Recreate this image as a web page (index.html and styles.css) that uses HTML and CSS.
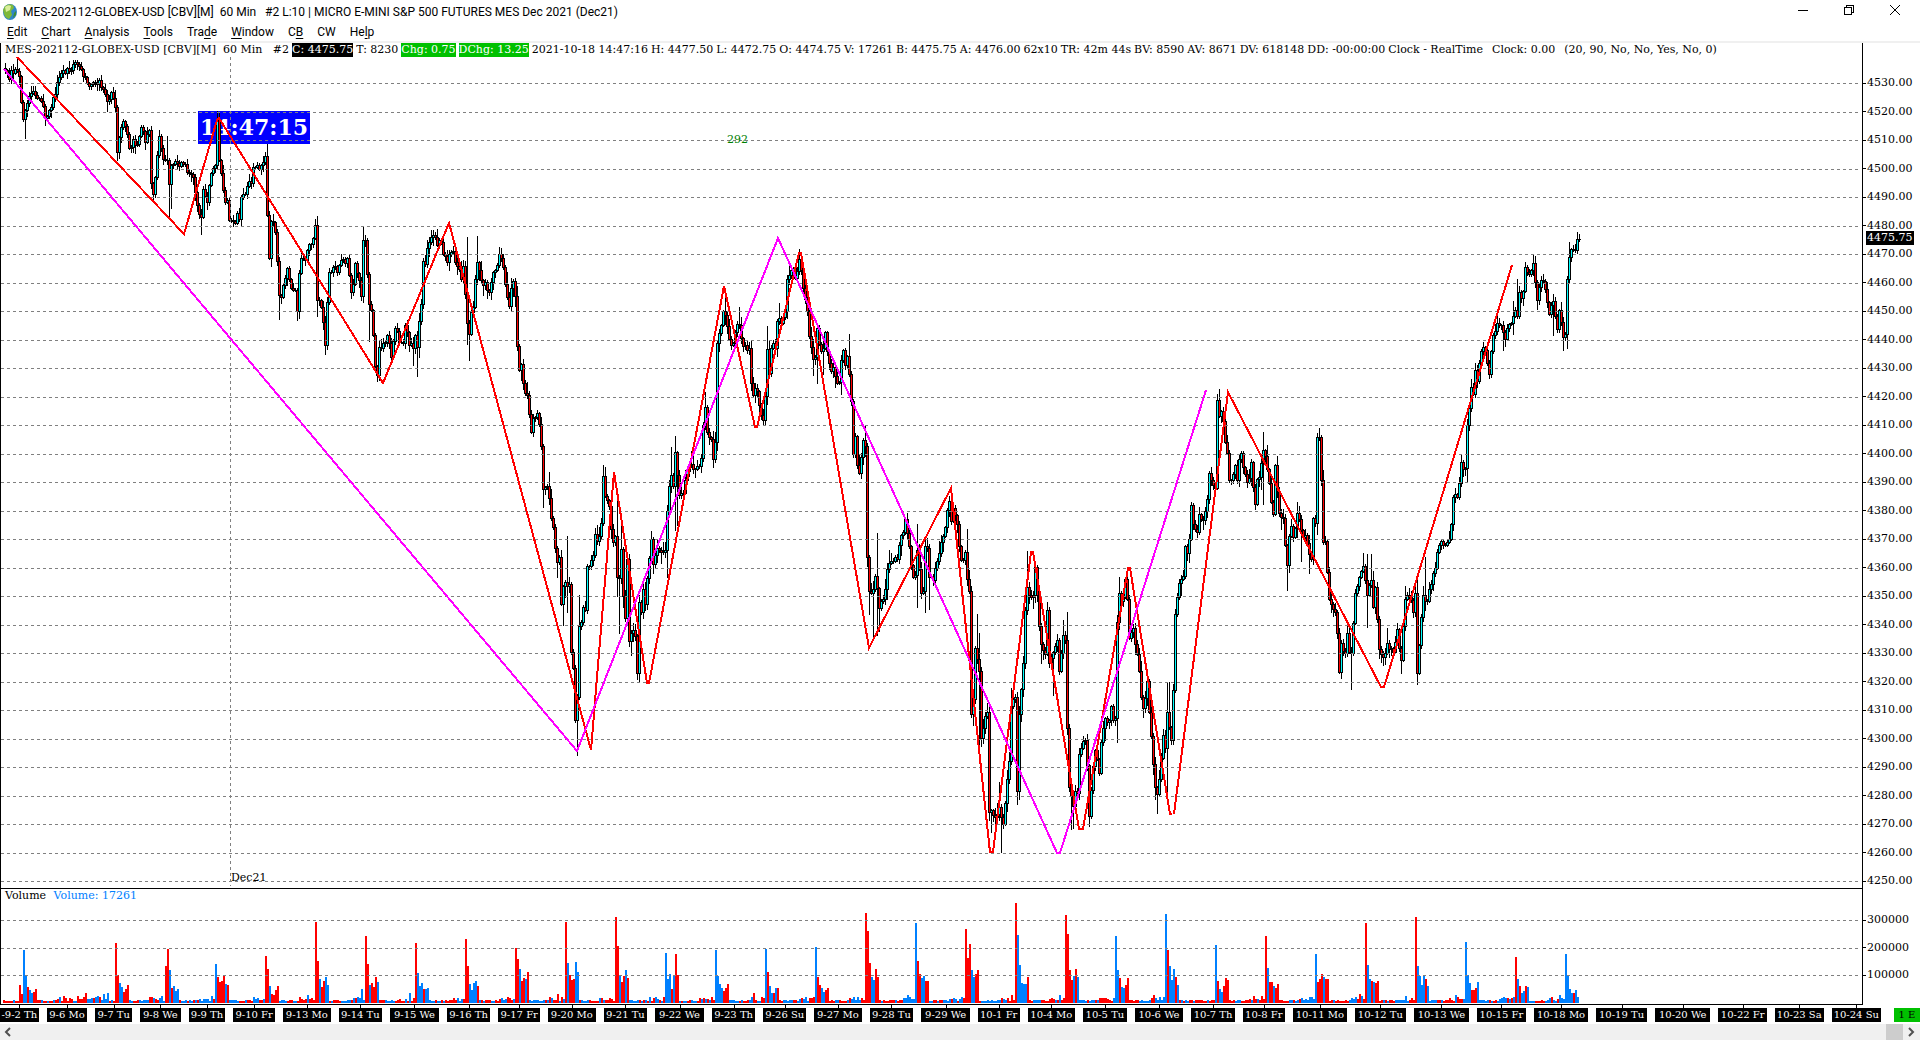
FILE: index.html
```html
<!DOCTYPE html>
<html lang="en">
<head>
    <meta charset="UTF-8">
    <meta name="viewport" content="width=device-width, initial-scale=1.0">
    <title>MES-202112-GLOBEX-USD [CBV][M]  60 Min</title>
    <link rel="stylesheet" href="styles.css">
</head>
<body>
    <header class="titlebar">
        <svg class="app-icon" viewBox="0 0 16 18">
            <ellipse cx="8" cy="9" rx="7" ry="8" fill="#2f86c9" />
            <path d="M3 3 Q7 0 11 2 L12 5 L9 8 L10 12 L7 16 Q3 15 2 11 L1 7 Z" fill="#7fb93a" />
            <path d="M3 4 Q6 1 9 3 L8 7 L4 9 Z" fill="#d9ee9a" />
            <path d="M12 10 L14 8 L14 12 L11 15 Z" fill="#3c8d3a" />
        </svg>
        <h1>MES-202112-GLOBEX-USD [CBV][M]&nbsp; 60 Min &nbsp; #2 L:10 | MICRO E-MINI S&amp;P 500 FUTURES MES Dec 2021 (Dec21)</h1>
        <div class="window-buttons">
            <button aria-label="Minimize"><svg viewBox="0 0 10 10"><path d="M0 5.5H10" /></svg></button>
            <button aria-label="Restore"><svg viewBox="0 0 10 10"><path d="M.5 2.5H7.5V9.5H.5ZM2.5 2.5V.5H9.5V7.5H7.5" /></svg></button>
            <button aria-label="Close"><svg class="smooth" viewBox="0 0 10 10"><path d="M0 0L10 10M10 0L0 10" /></svg></button>
        </div>
    </header>

    <nav class="menu">
        <button><u>E</u>dit</button>
        <button><u>C</u>hart</button>
        <button><u>A</u>nalysis</button>
        <button><u>T</u>ools</button>
        <button>Tra<u>d</u>e</button>
        <button><u>W</u>indow</button>
        <button>C<u>B</u></button>
        <button>CW</button>
        <button>He<u>l</u>p</button>
    </nav>

    <main class="chart">
        <section class="price-pane">
            <div class="readout">
                <span>MES-202112-GLOBEX-USD [CBV][M]&nbsp; 60 Min &nbsp; #2</span>
                <span class="last">C: 4475.75</span>
                <span>T: 8230</span>
                <span class="up">Chg: 0.75</span>
                <span class="up">DChg: 13.25</span>
                <span>2021-10-18 14:47:16</span>
                <span>H: 4477.50</span>
                <span>L: 4472.75</span>
                <span>O: 4474.75</span>
                <span>V: 17261</span>
                <span>B: 4475.75</span>
                <span>A: 4476.00</span>
                <span>62x10</span>
                <span>TR: 42m 44s</span>
                <span>BV: 8590</span>
                <span>AV: 8671</span>
                <span>DV: 618148</span>
                <span>DD: -00:00:00</span>
                <span>Clock - RealTime</span>
                <span class="study">Clock: 0.00</span>
                <span class="study">(20, 90, No, No, Yes, No, 0)</span>
            </div>
            <div class="plot">
                <div class="clock">14:47:15</div>
                <svg id="price" viewBox="1 57 1861 831" preserveAspectRatio="none"></svg>
                <span class="count">292</span>
                <span class="contract">Dec21</span>
            </div>
        </section>
        <aside class="price-axis" id="price-axis">
            <span class="current">4475.75</span>
        </aside>

        <section class="volume-pane">
            <div class="legend">Volume <span>Volume: 17261</span></div>
            <svg id="volume" viewBox="1 889 1861 115" preserveAspectRatio="none"></svg>
        </section>
        <aside class="volume-axis">
            <span>300000</span>
            <span>200000</span>
            <span>100000</span>
        </aside>
    </main>

    <div class="dates">
        <div class="date-labels" id="dates"></div>
        <span class="flag">1 E</span>
    </div>

    <div class="scrollbar">
        <button aria-label="Scroll left"><svg viewBox="0 0 16 16"><path d="M10 4L6 8L10 12" /></svg></button>
        <div class="track"><div class="thumb"></div></div>
        <button aria-label="Scroll right"><svg viewBox="0 0 16 16"><path d="M6 4L10 8L6 12" /></svg></button>
    </div>

    <script src="chart.js"></script>
</body>
</html>
```

FILE: styles.css
```css
* {
    margin: 0;
    padding: 0;
    box-sizing: border-box;
}

body {
    display: flex;
    flex-direction: column;
    height: 100vh;
    overflow: hidden;
    background: #fff;
    color: #000;
    font-family: Roboto, "Open Sans", sans-serif;
    font-size: 12px;
}

button {
    border: none;
    background: none;
    font: inherit;
    color: inherit;
}

svg {
    display: block;
}

/* Title bar and menu */

.titlebar {
    display: flex;
    align-items: center;
    height: 24px;
    padding: 0 2px;
}

.app-icon {
    width: 16px;
    height: 18px;
    margin-right: 5px;
}

.titlebar h1 {
    flex: 1;
    font-size: 12px;
    font-weight: 400;
    white-space: nowrap;
}

.window-buttons {
    display: flex;
    align-self: flex-start;
}

.window-buttons button {
    width: 46px;
    height: 20px;
    padding: 5px 18px;
}

.window-buttons svg {
    width: 10px;
    height: 10px;
    fill: none;
    stroke: #000;
    shape-rendering: crispEdges;
}

.window-buttons .smooth {
    shape-rendering: auto;
}

.menu {
    display: flex;
    gap: 14px;
    height: 19px;
    padding-left: 7px;
    line-height: 17px;
    border-bottom: 2px solid #f0f0f0;
}

.menu u {
    text-underline-offset: 2px;
}

/* Chart panes */

.chart {
    flex: 1;
    display: grid;
    grid-template-columns: 1fr 58px;
    grid-template-rows: 1fr 116px;
    min-height: 0;
    border-left: 1px solid #000;
    font-family: "DejaVu Serif", serif;
    font-size: 11px;
    line-height: 14px;
}

.price-pane {
    display: flex;
    flex-direction: column;
    min-width: 0;
    min-height: 0;
}

.readout {
    display: flex;
    gap: 3px;
    height: 14px;
    padding-left: 4px;
    white-space: nowrap;
}

.last {
    background: #000;
    color: #fff;
}

.up {
    background: #00c000;
    color: #fff;
}

.study {
    margin-left: 6px;
}

.plot {
    position: relative;
    flex: 1;
    min-height: 0;
}

.plot svg {
    position: absolute;
    inset: 0;
    width: 100%;
    height: 100%;
}

.clock {
    position: absolute;
    left: 197px;
    top: 54px;
    padding: 0 2px;
    background: #00f;
    color: #fff;
    font: bold 22px/33px "DejaVu Serif", serif;
}

.count,
.contract {
    position: absolute;
}

.count {
    left: 726px;
    top: 76px;
    color: #008000;
}

.contract {
    left: 230px;
    bottom: 3px;
}

.price-axis,
.volume-axis {
    position: relative;
    display: flex;
    flex-direction: column;
    justify-content: space-between;
    border-left: 1px solid #000;
}

.price-axis {
    padding-top: 33px;
}

.volume-axis {
    padding: 25px 0 22px;
}

.price-axis span,
.volume-axis span {
    display: flex;
    align-items: center;
    gap: 1px;
    height: 14px;
}

.price-axis span::before,
.volume-axis span::before {
    content: "";
    width: 3px;
    height: 1px;
    background: #000;
}

.price-axis .current {
    position: absolute;
    left: 3px;
    top: 188px;
    z-index: 1;
    padding: 0 1px;
    background: #000;
    color: #fff;
}

.price-axis .current::before {
    display: none;
}

.volume-pane {
    position: relative;
    border-top: 1px solid #000;
}

.legend {
    position: absolute;
    left: 4px;
    top: 0;
}

.legend span {
    margin-left: 4px;
    color: #0080ff;
}

.volume-pane svg {
    width: 100%;
    height: 115px;
}

#price,
#volume {
    fill: none;
    stroke-width: 2px;
    shape-rendering: crispEdges;
}

.grid {
    stroke: #808080;
    stroke-width: 1px;
    stroke-dasharray: 3 3;
}

.wick { fill: #000; }
.bull { fill: #0ff; }
.bear { fill: #f00; }
.vol-up { fill: #0080ff; }
.vol-down { fill: #f00; }
.swing { stroke: #f00; }
.trend { stroke: #f0f; }

/* Date strip */

.dates {
    display: flex;
    justify-content: space-between;
    height: 20px;
    font: 10px/14px "DejaVu Serif", serif;
    background: linear-gradient(#000, #000) 0 0 / calc(100% - 57px) 1px no-repeat;
}

.date-labels {
    flex: 1;
    display: flex;
    gap: 8px;
    padding-top: 4px;
    margin-right: 13px;
}

.date-labels span {
    position: relative;
    flex-basis: 0;
    height: 14px;
    background: #000;
    color: #fff;
    text-align: center;
    white-space: nowrap;
}

.date-labels span::before {
    content: "";
    position: absolute;
    left: 50%;
    top: -4px;
    width: 1px;
    height: 4px;
    background: #000;
}

.flag {
    width: 26px;
    height: 14px;
    margin-top: 4px;
    background: #00c000;
    text-align: center;
}

/* Horizontal scroll bar */

.scrollbar {
    display: flex;
    height: 16px;
    background: #f0f0f0;
}

.scrollbar button {
    width: 17px;
    height: 16px;
}

.scrollbar svg {
    width: 16px;
    height: 16px;
    fill: none;
    stroke: #505050;
    stroke-width: 2px;
}

.track {
    flex: 1;
    display: flex;
    justify-content: flex-end;
}

.thumb {
    width: 17px;
    background: #cdcdcd;
}
```

FILE: chart.js
```js
// Closing levels along the series: x y pairs in plot units
const closes = `
5 70 8 81 10 70 12 73 17 71 20 75 22 128 24 113 26 103 30 93 34 89 37 98 42 102 45 118 50 108 54 98
57 82 62 71 67 68 72 70 75 62 80 67 85 77 89 86 92 82 100 80 104 93 107 101 111 92 115 107 117 152
120 133 123 121 126 130 129 148 133 139 136 148 138 136 141 127 145 142 149 130 151 183 153 194
155 177 157 155 159 136 163 159 167 160 169 184 171 165 177 163 182 162 187 172 193 177 197 205
201 217 203 189 207 202 211 173 215 165 217 120 219 160 223 190 225 202 227 200 229 220 235 223
237 213 239 219 241 197 246 193 248 178 251 183 254 162 258 167 262 163 265 156 267 215 269 258
271 221 274 222 276 242 278 277 280 306 282 289 287 268 290 288 295 290 297 311 299 273 301 258
305 260 308 247 312 240 315 225 317 300 321 307 323 322 325 345 327 302 329 272 333 267 337 272
341 260 345 263 348 260 351 292 354 283 355 263 358 277 361 296 363 240 366 240 368 307 372 306
374 357 377 375 379 347 383 343 388 333 391 357 395 328 400 345 403 343 405 325 409 345 413 348
415 335 417 347 419 321 421 304 423 261 425 264 427 248 430 237 435 237 437 245 440 235 442 250
446 261 450 254 453 251 457 266 461 279 463 266 467 323 469 334 471 312 473 307 475 279 477 262
480 280 485 282 488 292 491 282 495 270 499 254 504 270 506 291 509 306 512 277 515 296 517 346
519 370 521 364 524 396 527 395 531 432 534 416 538 410 541 446 543 489 547 486 551 518 554 536
557 562 559 557 561 604 563 586 569 584 571 652 573 668 575 720 577 697 579 626 582 616 584 606
586 608 587 566 592 559 595 534 598 539 601 523 603 476 605 496 609 506 612 543 615 536 618 593
621 549 623 596 625 618 627 559 629 641 633 630 635 636 637 673 639 602 641 612 643 589 645 604
647 578 651 539 653 564 656 546 660 553 665 550 667 511 670 471 673 486 675 452 679 495 683 493
687 471 690 464 697 466 700 464 702 446 704 398 707 432 711 439 713 459 715 442 717 343 720 332
723 311 726 316 729 339 733 343 736 327 739 325 742 345 747 350 749 348 752 399 756 384 759 405
763 420 765 396 767 349 769 373 772 337 775 348 777 321 782 323 785 311 787 279 792 268 796 279
799 259 802 279 804 294 807 311 809 336 812 357 815 357 817 328 820 348 823 348 825 332 829 363
831 371 833 367 838 387 841 360 843 350 845 365 848 357 851 401 853 454 855 436 858 478 861 457
863 440 865 446 867 557 869 591 874 589 875 576 879 608 883 599 885 589 887 569 893 561 897 559
899 545 903 532 905 519 909 546 913 577 915 575 917 550 921 593 923 591 925 546 927 548 929 577
933 580 937 561 941 542 944 536 947 510 949 501 951 521 953 508 956 512 958 538 962 565 965 552
967 579 969 591 971 714 973 699 975 648 979 671 981 738 983 728 987 712 989 812 997 814 1000 808
1003 824 1006 793 1009 761 1011 706 1015 697 1017 791 1019 714 1023 663 1025 610 1027 587 1030 603
1033 595 1035 567 1039 626 1041 644 1045 654 1047 610 1049 663 1053 652 1057 640 1059 671 1062 638
1065 640 1067 728 1069 787 1073 806 1075 791 1077 793 1079 754 1085 740 1087 765 1089 816 1092 783
1094 750 1097 759 1099 773 1101 742 1105 718 1109 720 1111 706 1113 720 1115 718 1117 622 1119 593
1122 601 1125 579 1127 599 1129 638 1133 628 1137 654 1139 671 1141 697 1143 708 1147 681 1149 712
1151 736 1155 787 1157 794 1159 779 1163 735 1165 748 1167 712 1171 740 1173 690 1175 614 1179 583
1183 576 1185 546 1188 556 1191 505 1193 524 1197 532 1199 514 1203 520 1207 499 1209 473 1213 485
1215 488 1217 400 1219 416 1222 406 1225 442 1227 453 1229 480 1233 474 1235 465 1237 480 1239 459
1241 453 1245 474 1248 486 1251 462 1255 504 1257 479 1260 471 1263 450 1267 469 1273 514 1275 465
1279 513 1283 518 1287 565 1289 536 1291 526 1294 539 1297 513 1301 530 1307 543 1311 559 1313 518
1315 523 1317 437 1319 437 1321 480 1323 542 1325 541 1329 599 1332 605 1336 614 1339 672 1341 643
1345 653 1347 633 1350 660 1352 641 1355 593 1358 580 1363 566 1367 595 1371 580 1373 607 1375 587
1379 649 1382 660 1387 643 1393 652 1397 629 1401 660 1403 626 1405 599 1410 597 1413 612 1415 593
1417 673 1419 645 1421 617 1423 595 1427 601 1431 584 1435 568 1438 545 1443 545 1448 541 1451 524
1453 497 1458 497 1461 462 1465 468 1467 425 1471 387 1473 394 1475 370 1477 381 1481 351 1485 350
1489 374 1493 335 1497 323 1502 325 1505 339 1508 327 1512 319 1514 306 1517 316 1519 292 1522 300
1525 267 1529 274 1533 263 1537 300 1541 280 1545 289 1549 314 1553 301 1557 329 1559 310 1563 337
1565 334 1567 279 1569 257 1572 249 1575 250 1577 239 1579 239`.trim().split(/\s+/).map(Number);

// Long shadows: x -> [high, low], 0 where the usual shadow is kept
const shadows = {
    17: [57, 0], 25: [0, 138], 107: [0, 111], 117: [0, 160], 153: [0, 201], 167: [136, 0], 169: [0, 216],
    171: [0, 208], 201: [0, 234], 217: [111, 0], 219: [113, 0], 267: [144, 0], 279: [0, 319], 297: [0, 320],
    317: [216, 316], 325: [0, 354], 363: [227, 0], 369: [0, 341], 377: [0, 381], 413: [0, 365], 417: [0, 376],
    467: [237, 344], 469: [0, 360], 477: [236, 0], 499: [247, 0], 543: [0, 507], 549: [472, 0],
    557: [0, 577], 563: [0, 625], 567: [536, 612], 577: [0, 755], 579: [595, 0], 605: [467, 0],
    617: [498, 596], 619: [0, 633], 621: [522, 0], 631: [0, 655], 637: [0, 679], 651: [531, 0],
    667: [0, 577], 671: [447, 0], 675: [436, 530], 677: [0, 525], 705: [392, 0], 713: [0, 467],
    725: [297, 0], 739: [307, 0], 763: [0, 424], 767: [326, 0], 779: [303, 0], 799: [249, 0],
    813: [0, 375], 817: [0, 383], 823: [0, 374], 849: [334, 0], 865: [426, 0], 869: [0, 614], 873: [0, 640],
    877: [533, 635], 879: [0, 631], 889: [550, 0], 917: [524, 607], 925: [0, 612], 929: [0, 609],
    951: [487, 0], 967: [529, 0], 973: [0, 725], 977: [614, 0], 979: [633, 754], 991: [0, 832],
    999: [782, 0], 1001: [0, 852], 1011: [688, 0], 1017: [0, 804], 1027: [551, 0], 1035: [563, 0],
    1041: [0, 663], 1053: [0, 695], 1063: [620, 0], 1067: [612, 0], 1071: [0, 829], 1073: [0, 828],
    1089: [0, 826], 1117: [0, 742], 1119: [577, 0], 1127: [568, 0], 1143: [0, 717], 1157: [0, 813],
    1167: [683, 795], 1169: [682, 0], 1191: [502, 0], 1217: [394, 0], 1263: [432, 504], 1267: [445, 0],
    1287: [0, 590], 1301: [0, 561], 1309: [0, 573], 1317: [433, 0], 1341: [0, 678], 1351: [0, 689],
    1363: [553, 0], 1367: [554, 627], 1371: [554, 0], 1387: [628, 0], 1401: [0, 673], 1405: [586, 0],
    1417: [576, 684], 1425: [557, 0], 1467: [0, 482], 1497: [312, 0], 1503: [0, 350], 1513: [301, 334],
    1517: [279, 0], 1525: [262, 0], 1533: [255, 0], 1537: [0, 309], 1553: [0, 335], 1563: [0, 350],
    1567: [0, 348], 1569: [242, 0], 1577: [232, 0]
};

const swing = '17,57 184,234 217,120 219,118 383,383 449,223 591,750 614,472 647,683 649,683 724,286 755,427 757,427 ' +
    '799,253 801,253 869,648 951,488 990,852 993,852 1031,552 1033,552 1079,829 1083,829 1128,568 1130,568 1170,814 1172,814';
const swing2 = '1174,814 1228,392 1381,687 1384,687 1512,265';
const trend = '4,69 577,751 778,238 1057,853 1060,853 1206,390';

// Session volume: start x, then bar heights (r = down, b = up)
const sessions = [
    [19, 'r18 r9 b53 b27 r16 b13 b10 r11 r14'], [115, 'r60 r28 b20 b16 r11 r14 r18'],
    [165, 'r37 r54 b33 r15 b17 b12 b14'], [215, 'b39 r26 r21 r22 r27 b19 r18'],
    [265, 'r47 r34 b17 r9 r8 r13 r17'], [315, 'r81 r42 b24 r16 r22 b26 b18'],
    [361, 'b14 b3 r67 r39 b18 r20 r16 r26 b21'], [415, 'r60 b30 b17 b20 r14 b14 b15'],
    [465, 'r64 r37 b19 b13 b20 b22 r17'], [515, 'r55 r44 b34 r22 r25 b24 r31'],
    [565, 'r81 b40 r28 r23 r24 b41 b31'], [615, 'r86 r57 b27 r21 r27 b33 r25'],
    [665, 'b50 b24 b29 r14 b28 r49 r28'], [715, 'b53 b27 b19 b15 r12 r15 r19'],
    [765, 'b54 r31 b17 b10 r10 b15 r15'], [815, 'b56 r26 r18 b15 b11 r13 r15'],
    [865, 'r90 r72 r40 b26 b23 r34 r26'], [915, 'b80 r42 r29 b25 b27 r22 r22'],
    [965, 'r74 r45 r59 b33 b26 r29 r33'], [1015, 'r100 b68 b38 b20 b19 b19 r26'],
    [1065, 'r88 r69 r33 r23 b27 r34 b26'], [1115, 'b67 b33 r25 b16 b15 r18 r25'],
    [1165, 'b89 r53 b37 b23 b34 r26 b18'], [1215, 'b58 r22 b14 b11 r17 r25 r23'],
    [1265, 'r67 b35 r21 r21 b17 r15 r19'], [1315, 'b49 r21 r24 r29 b26 r24 r24'],
    [1365, 'r80 b38 b24 r22 b21 r20 r22'], [1415, 'r86 b37 b27 b18 b28 r24 b17'],
    [1465, 'b61 b28 b20 r13 r13 r15 b21'], [1515, 'r46 b24 r17 b10 b12 r17 b16'],
    [1565, 'b49 b28 b14 b10 r10 b13 b6']
];

// Label and its share of the strip
const dates = [
    ['-9-2 Th', 39], ['9-6 Mo', 41], ['9-7 Tu', 37], ['9-8 We', 41], ['9-9 Th', 37], ['9-10 Fr', 42],
    ['9-13 Mo', 48], ['9-14 Tu', 44], ['9-15 We', 49], ['9-16 Th', 44], ['9-17 Fr', 42], ['9-20 Mo', 48],
    ['9-21 Tu', 44], ['9-22 We', 49], ['9-23 Th', 44], ['9-26 Su', 43], ['9-27 Mo', 48], ['9-28 Tu', 44],
    ['9-29 We', 49], ['10-1 Fr', 42], ['10-4 Mo', 48], ['10-5 Tu', 44], ['10-6 We', 49], ['10-7 Th', 44],
    ['10-8 Fr', 42], ['10-11 Mo', 55], ['10-12 Tu', 51], ['10-13 We', 56], ['10-15 Fr', 49], ['10-18 Mo', 55],
    ['10-19 Tu', 51], ['10-20 We', 56], ['10-22 Fr', 49], ['10-23 Sa', 49], ['10-24 Su', 50]
];

const LAST_X = 1579;
let seed = 7;
function rnd() {
    seed = (seed * 16807) % 2147483647;
    return seed / 2147483647;
}

function add(svg, name, attrs) {
    const el = document.createElementNS('http://www.w3.org/2000/svg', name);
    for (const key in attrs) el.setAttribute(key, attrs[key]);
    svg.appendChild(el);
}

function box(x, y, w, h) {
    return `M${x} ${y}h${w}v${h}h${-w}z`;
}

function drawPrice() {
    const svg = document.getElementById('price');
    const price = [];
    let i = 0;
    for (let x = 5; x <= LAST_X; x += 2) {
        while (i + 4 < closes.length && closes[i + 2] < x) i += 2;
        const [x0, y0, x1, y1] = closes.slice(i, i + 4);
        const t = (x - x0) / (x1 - x0);
        const wobble = t > 0.2 && t < 0.8 ? (rnd() - 0.5) * 8 : 0;
        price.push([x, Math.round(y0 + (y1 - y0) * t + wobble)]);
    }

    let black = '', bull = '', bear = '';
    let open = 68;
    for (const [x, close] of price) {
        const top = Math.min(open, close);
        const bottom = Math.max(open, close);
        const reach = x > 400 && x < 1450 ? 12 : 8;
        let high = top - Math.round(rnd() * rnd() * reach + 1);
        let low = bottom + Math.round(rnd() * rnd() * reach + 1);
        if (shadows[x]) {
            high = Math.min(shadows[x][0] || high, top);
            low = Math.max(shadows[x][1] || low, bottom);
        }
        high = Math.max(high, 57);
        black += box(x, high, 1, low - high + 1) + box(x - 1, top, 3, bottom - top + 1);
        if (bottom - top > 1) {
            const inner = box(x, top + 1, 1, bottom - top - 1);
            if (close < open) bull += inner; else bear += inner;
        }
        open = close;
    }
    add(svg, 'path', { class: 'wick', d: black });
    add(svg, 'path', { class: 'bull', d: bull });
    add(svg, 'path', { class: 'bear', d: bear });

    const axis = document.getElementById('price-axis');
    for (let k = 0; k <= 28; k++) {
        const y = Math.round(83 + 28.5 * k) + 0.5;
        add(svg, 'path', { class: 'grid', d: `M1 ${y}H1860` });
        const label = document.createElement('span');
        label.textContent = (4530 - 10 * k).toFixed(2);
        axis.appendChild(label);
    }
    add(svg, 'path', { class: 'grid', d: 'M230.5 57V886' });

    add(svg, 'polyline', { class: 'swing', points: swing });
    add(svg, 'polyline', { class: 'swing', points: swing2 });
    add(svg, 'polyline', { class: 'trend', points: trend });
}

function drawVolume() {
    const svg = document.getElementById('volume');
    const bars = {};
    for (const [start, list] of sessions) {
        list.split(' ').forEach((bar, n) => {
            bars[start + n * 2] = [bar[0], Number(bar.slice(1))];
        });
    }
    let up = '', down = '';
    let quiet = 0;
    let side = 'r';
    for (let x = 3; x <= 1577; x += 2) {
        let bar = bars[x];
        if (bar) {
            quiet = 0;
        } else {
            // overnight trade picks up towards the next open
            quiet++;
            if (rnd() < 0.4) side = side === 'r' ? 'b' : 'r';
            const lift = quiet > 10 ? 4 : 1;
            bar = [side, Math.round(2 + rnd() * lift)];
            if (quiet > 12 && rnd() < 0.2) bar[1] += 4;
        }
        const d = box(x, 1003 - bar[1], 2, bar[1]);
        if (bar[0] === 'b') up += d; else down += d;
    }
    add(svg, 'path', { class: 'vol-up', d: up });
    add(svg, 'path', { class: 'vol-down', d: down });
    for (const y of [920.5, 948.5, 975.5]) {
        add(svg, 'path', { class: 'grid', d: `M1 ${y}H1860` });
    }
}

function drawDates() {
    const strip = document.getElementById('dates');
    for (const [text, share] of dates) {
        const label = document.createElement('span');
        label.textContent = text;
        label.style.flexGrow = share;
        strip.appendChild(label);
    }
}

drawPrice();
drawVolume();
drawDates();
```
